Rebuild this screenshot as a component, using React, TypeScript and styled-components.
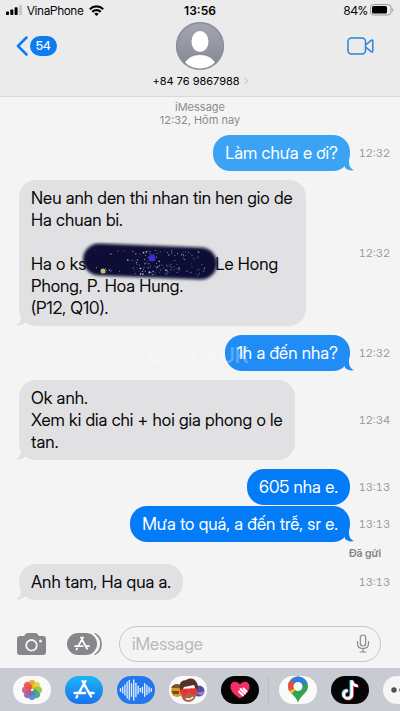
import React from "react";
import styled, { createGlobalStyle } from "styled-components";

const FONT = `"Inter Display", Inter, "Noto Sans", sans-serif`;

const Global = createGlobalStyle`
  * { box-sizing: border-box; }
  html, body, #root { height: 100%; }
  body { margin: 0; background: #f4f4f5; font-family: ${FONT}; color: #000; }
  svg { display: block; flex: none; }
`;

const Screen = styled.div`
  display: flex;
  flex-direction: column;
  min-height: 100%;
  overflow: hidden;
`;

const Header = styled.header`
  background: #ebebec;
  border-bottom: 1px solid #d9d9da;
`;

const StatusBar = styled.div`
  display: grid;
  grid-template-columns: 1fr auto 1fr;
  align-items: center;
  height: 20px;
  padding: 0 6px;
  font-size: 12px;
`;

const StatusGroup = styled.div<{ $end?: boolean }>`
  display: flex;
  align-items: center;
  justify-content: ${(p) => (p.$end ? "flex-end" : "flex-start")};
  gap: ${(p) => (p.$end ? 2 : 5)}px;
`;

const Clock = styled.time`
  font-family: Inter, sans-serif;
  font-weight: 600;
  font-size: 12px;
`;

const NavBar = styled.nav`
  display: grid;
  grid-template-columns: 1fr auto 1fr;
  height: 76px;
  padding: 2px 26px 0 16px;
`;

const Button = styled.button`
  display: flex;
  align-items: center;
  justify-content: center;
  border: 0;
  padding: 0;
  background: none;
  color: inherit;
  font: inherit;
`;

const BackButton = styled(Button)`
  justify-self: start;
  align-self: start;
  height: 48px;
  gap: 2px;
`;

const Badge = styled.span`
  background: #0a7cf4;
  color: #fff;
  border-radius: 10px;
  height: 20px;
  line-height: 20px;
  padding: 0 6px;
  font-size: 12px;
  font-weight: 500;
`;

const Contact = styled(Button)`
  justify-content: flex-start;
  flex-direction: column;
  gap: 4px;
  padding-left: 10px;
`;

const ContactName = styled.span`
  display: flex;
  align-items: center;
  gap: 4px;
  font-family: Inter, sans-serif;
  font-size: 11px;
  line-height: 14px;
`;

const VideoButton = styled(Button)`
  justify-self: end;
  align-self: start;
  height: 48px;
`;

const Thread = styled.main`
  position: relative;
  flex: 1;
  display: flex;
  flex-direction: column;
  padding: 4px 10px 0 19px;
`;

const Stamp = styled.div`
  text-align: center;
  color: #8b8b8f;
  font-family: Inter, "Noto Sans", sans-serif;
  font-size: 11px;
  line-height: 13px;
  padding: 0 9px 8px 0;
`;

const Row = styled.div<{ $tight?: boolean }>`
  display: flex;
  align-items: center;
  justify-content: space-between;
  margin-bottom: ${(p) => (p.$tight ? 1 : 9)}px;
`;

const Time = styled.time`
  color: #97979b;
  font-size: 11px;
  font-variant-numeric: tabular-nums;
  width: 40px;
  text-align: right;
`;

const Side = styled.div<{ $mine?: boolean }>`
  flex: 1;
  display: flex;
  justify-content: ${(p) => (p.$mine ? "flex-end" : "flex-start")};
`;

const Bubble = styled.div<{ $color: string; $mine?: boolean }>`
  position: relative;
  max-width: 287px;
  padding: 7px 12px;
  border-radius: 17px;
  font-size: 17px;
  line-height: 22px;
  white-space: pre-line;
  background: ${(p) => p.$color};
  color: ${(p) => (p.$mine ? "#fff" : "#0a0a0a")};
`;

const Tail = styled.svg<{ $mine?: boolean }>`
  position: absolute;
  bottom: 0;
  ${(p) => (p.$mine ? "right: -4px;" : "left: -3px; transform: scaleX(-1);")}
`;

const Scribble = styled.span`
  position: relative;
  display: inline-block;
  width: 129px;
  height: 10px;
  svg { position: absolute; left: -5px; top: -18px; }
`;

const Delivered = styled.div`
  align-self: flex-end;
  color: #85858a;
  font-size: 11px;
  font-weight: 600;
  line-height: 12px;
  margin: -4px 9px 5px 0;
`;

const Watermark = styled.div`
  position: absolute;
  left: 148px;
  top: 247px;
  font-size: 21px;
  font-weight: 600;
  line-height: 24px;
  color: rgba(255, 255, 255, 0.26);
`;

const Composer = styled.form`
  display: flex;
  align-items: center;
  height: 43px;
  padding: 0 19px 6px 17px;
`;

const ToolButton = styled(Button)<{ $gap: number }>`
  margin-right: ${(p) => p.$gap}px;
`;

const Field = styled.label`
  flex: 1;
  min-width: 0;
  display: flex;
  align-items: center;
  height: 36px;
  padding: 0 10px 0 12px;
  border: 1px solid #c6c6c9;
  border-radius: 18px;
`;

const Input = styled.input`
  flex: 1;
  min-width: 0;
  border: 0;
  padding: 0;
  outline: 0;
  background: none;
  font: 17px/22px ${FONT};
  &::placeholder { color: #b9b9bd; opacity: 1; }
`;

const AppStrip = styled.div`
  display: flex;
  align-items: center;
  gap: 14px;
  height: 43px;
  padding-left: 13px;
  background: #c9cbd3;
  overflow: hidden;
`;

const AppButton = styled(Button)<{ $bg: string }>`
  flex: none;
  width: 38px;
  height: 28px;
  border-radius: 14px;
  overflow: hidden;
  background: ${(p) => p.$bg};
`;

const Divider = styled.span`
  flex: none;
  width: 1px;
  height: 26px;
  margin: 0 -4px 0 -5px;
  background: #b9bbc3;
`;

const TAIL = "M0 2H4V6C4 10 6 13 9 14C6 15 3 14 0 12Z";

function Message({ mine, color = "#e1e1e4", tail = true, time, tight, children }: {
  mine?: boolean; color?: string; tail?: boolean; time: string; tight?: boolean; children: React.ReactNode;
}) {
  return (
    <Row $tight={tight}>
      <Side $mine={mine}>
        <Bubble $mine={mine} $color={color}>
          {children}
          {tail && (
            <Tail $mine={mine} width="9" height="15" viewBox="0 0 9 15">
              <path d={mine ? `M-4 0H4V6Z${TAIL}` : TAIL} fill={color} />
            </Tail>
          )}
        </Bubble>
      </Side>
      <Time>{time}</Time>
    </Row>
  );
}

const noise = (n: number) => {
  const v = Math.sin(n * 127.1 + 11.7) * 43758.5453;
  return v - Math.floor(v);
};

const stars = Array.from({ length: 150 }, (_, i) => {
  const x = i < 30 ? 10 + noise(i) * 60 : 54 + noise(i) * 70;
  return { x, y: 6 + noise(i + 500) * 26 + x / 40, r: i % 9 === 0 ? 0.9 : 0.5, o: 0.3 + noise(i + 900) * 0.6 };
});

const StarryScribble = () => (
  <Scribble>
    <svg width="140" height="40" viewBox="0 0 140 40" aria-hidden="true">
      <defs><filter id="soft" filterUnits="userSpaceOnUse" x="0" y="0" width="140" height="40"><feGaussianBlur stdDeviation="1.4" /></filter></defs>
      <path d="M18 17.500L120 21.500" stroke="#100f35" strokeWidth="32" strokeLinecap="round" filter="url(#soft)" />
      {stars.map((s, i) => <circle key={i} cx={s.x} cy={s.y} r={s.r} fill="#d8dcff" opacity={s.o} />)}
      <circle cx="71" cy="16" r="3.500" fill="#4934e8" opacity=".85" />
      <circle cx="22" cy="29" r="2.500" fill="#c3c46c" />
    </svg>
  </Scribble>
);

const AStore = ({ size }: { size: number }) => (
  <svg width={size} height={size} viewBox="0 0 22 22" fill="none" stroke="#fff" strokeWidth="2.400" strokeLinecap="round">
    <path d="M12.500 2L6 13.500M9.500 2L18 17.500M1.500 14H12M16.500 14H20.500M4.300 17L3.500 18.500" />
  </svg>
);

const petals = ["#f49a22", "#e6cf29", "#8fc13e", "#3ea577", "#4b86cb", "#8a62ae", "#d14f82", "#e8503a"];
const waves = [3, 7, 12, 19, 23, 15, 24, 16, 9, 4, 7, 15, 11, 6, 3];

export default function App() {
  return (
    <Screen>
      <Global />
      <Header>
        <StatusBar>
          <StatusGroup>
            <svg width="16" height="10" viewBox="0 0 16 10" aria-label="Signal">
              <rect x="0" y="6.500" width="3" height="3.500" rx=".8" /><rect x="4.300" y="4.500" width="3" height="5.500" rx=".8" />
              <rect x="8.600" y="2.200" width="3" height="7.800" rx=".8" /><rect x="13" y="0" width="3" height="10" rx=".8" fill="#c8c8ca" />
            </svg>
            <span>VinaPhone</span>
            <svg width="15" height="11" viewBox="0 0 15 11" aria-label="Wi-Fi" fill="none" stroke="#000" strokeWidth="2.200">
              <path d="M.8 4.200A9.500 9.500 0 0 1 14.200 4.200M3.300 6.900A6 6 0 0 1 11.700 6.900" /><path d="M5.300 8.700A3.200 3.200 0 0 1 9.700 8.700L7.500 11Z" fill="#000" stroke="none" />
            </svg>
          </StatusGroup>
          <Clock>13:56</Clock>
          <StatusGroup $end>
            <span>84%</span>
            <svg width="24" height="12" viewBox="0 0 24 12" aria-label="Battery">
              <rect x=".5" y=".5" width="20.500" height="10.500" rx="3" fill="none" stroke="#9a9a9c" /><rect x="2" y="2" width="15" height="7.500" rx="1.500" /><path d="M22.300 4V8Q23.500 7.200 23.500 6T22.300 4" fill="#9a9a9c" />
            </svg>
          </StatusGroup>
        </StatusBar>
        <NavBar>
          <BackButton aria-label="Back, 54 unread">
            <svg width="12" height="20" viewBox="0 0 12 20" fill="none" stroke="#0a7cf4" strokeWidth="2.500" strokeLinecap="round" strokeLinejoin="round"><path d="M10.500 1.500L2 10L10.500 18.500" /></svg>
            <Badge>54</Badge>
          </BackButton>
          <Contact>
            <svg width="48" height="48" viewBox="0 0 48 48" aria-hidden="true">
              <defs><linearGradient id="avatar" x2="0" y2="1"><stop stopColor="#a3a6af" /><stop offset="1" stopColor="#858892" /></linearGradient><clipPath id="face"><circle cx="24" cy="24" r="24" /></clipPath></defs>
              <circle cx="24" cy="24" r="24" fill="url(#avatar)" />
              <g fill="#fff" clipPath="url(#face)"><ellipse cx="24" cy="19.500" rx="8.500" ry="10.500" /><ellipse cx="24" cy="44" rx="15.500" ry="11" /></g>
              <circle cx="24" cy="24" r="23.200" fill="none" stroke="#8d909a" strokeWidth="1.600" />
            </svg>
            <ContactName>+84 76 9867988
              <svg width="4" height="8" viewBox="0 0 4 8" fill="none" stroke="#b9b9bc"><path d="M.5 .8L3.500 4L.5 7.200" /></svg>
            </ContactName>
          </Contact>
          <VideoButton aria-label="Video call">
            <svg width="27" height="18" viewBox="0 0 27 18" fill="none" stroke="#2a82dc" strokeWidth="1.500" strokeLinejoin="round"><rect x="1" y="1" width="17.500" height="16" rx="3.500" /><path d="M19 7.800L24 3.400Q25.800 2.300 25.800 4V14Q25.800 15.700 24 14.600L19 10.200" /></svg>
          </VideoButton>
        </NavBar>
      </Header>

      <Thread>
        <Stamp>iMessage<br />12:32, Hôm nay</Stamp>
        <Message mine color="#3aa3f3" time="12:32">Làm chưa e ơi?</Message>
        <Message time="12:32">
          {"Neu anh den thi nhan tin hen gio de Ha chuan bi.\n\nHa o ks"}<StarryScribble />{"Le Hong Phong, P. Hoa Hung.\n(P12, Q10)."}
        </Message>
        <Message mine color="#208cf5" time="12:32">1h a đến nha?</Message>
        <Message time="12:34">{"Ok anh.\nXem ki dia chi + hoi gia phong o le\ntan."}</Message>
        <Message mine color="#047bf7" tail={false} tight time="13:13">605 nha e.</Message>
        <Message mine color="#047bf7" time="13:13">Mưa to quá, a đến trễ, sr e.</Message>
        <Delivered>Đã gửi</Delivered>
        <Message time="13:13">Anh tam, Ha qua a.</Message>
        <Watermark>CHECKUK</Watermark>
      </Thread>

      <Composer onSubmit={(e) => e.preventDefault()}>
        <ToolButton type="button" aria-label="Camera" $gap={21}>
          <svg width="29" height="24" viewBox="0 0 29 24"><path fill="#87878b" d="M3 4H7L9 1.500Q9.500 1 10.500 1H18.500Q19.500 1 20 1.500L22 4H26Q29 4 29 7V20Q29 23 26 23H3Q0 23 0 20V7Q0 4 3 4Z" /><circle cx="14.500" cy="13.300" r="5.300" fill="none" stroke="#f4f4f5" strokeWidth="1.800" /><circle cx="23.500" cy="9" r="1.500" fill="#f4f4f5" /></svg>
        </ToolButton>
        <ToolButton type="button" aria-label="Apps" $gap={17}>
          <svg width="35" height="24" viewBox="0 0 35 24"><rect y="1" width="30" height="22" rx="11" fill="#87878b" /><path d="M27.500 1.500Q34 4.500 34 12T27.500 22.500" fill="none" stroke="#87878b" strokeWidth="1.700" /><path d="M25.500 1.500Q31.500 5 31.500 12T25.500 22.500" fill="none" stroke="#f4f4f5" strokeWidth="1.700" /><g transform="translate(7 4)"><AStore size={16} /></g></svg>
        </ToolButton>
        <Field>
          <Input aria-label="Message" placeholder="iMessage" />
          <svg width="14" height="19" viewBox="0 0 14 19" fill="none" stroke="#8a8a8e" strokeWidth="1.200" strokeLinecap="round"><rect x="4.300" y="1" width="5.400" height="11" rx="2.700" /><path d="M1.500 7.500V9.500Q1.500 14.500 7 14.500T12.500 9.500V7.500M7 14.500V18M4 18H10" /></svg>
        </Field>
      </Composer>

      <AppStrip>
        <AppButton $bg="#fafafa" aria-label="Photos">
          <svg width="22" height="22" viewBox="0 0 22 22">{petals.map((c, i) => <rect key={c} x="7.700" y="1" width="6.600" height="9" rx="3.200" fill={c} opacity=".9" transform={`rotate(${i * 45} 11 11)`} />)}</svg>
        </AppButton>
        <AppButton $bg="linear-gradient(#1cb5f5, #1a72ee)" aria-label="App Store"><AStore size={22} /></AppButton>
        <AppButton $bg="#2277ee" aria-label="Audio">
          <svg width="34" height="24" viewBox="0 0 34 24" stroke="#e6f2ff" strokeWidth="1.300" strokeLinecap="round">{waves.map((h, i) => <path key={i} d={`M${1.500 + i * 2.200} ${12 - h / 2.400}V${12 + h / 2.400}`} />)}</svg>
        </AppButton>
        <AppButton $bg="#fafafa" aria-label="Memoji">
          <svg width="38" height="28" viewBox="0 0 38 28"><circle cx="8" cy="15" r="6" fill="#d99a25" /><path d="M2 12Q5 6 12 9V12Z" fill="#7a5522" /><path d="M3 15H10V18H4Z" fill="#6b4b28" /><circle cx="30" cy="15" r="5.500" fill="#4d4ea4" /><path d="M27 17L36 15L33 20Z" fill="#a07ccf" /><path d="M12 13Q11 26 20 26Q28 25 28 12Z" fill="#ad6546" /><path d="M11 14Q9 4 17 4Q24 0 28 7Q30 11 28 15L25 9L15 11L13 15Z" fill="#573125" /><path d="M15.500 20C12 18 10.500 16.500 11 14.500Q12.500 12 15.300 14Q18 11.500 19.800 14.300Q19.500 18 15.500 20ZM24 19C20.500 17 19.500 15.500 20.300 13.500Q21.800 11.500 24 13.500Q26.500 11.500 28.200 13.500Q28 17 24 19Z" fill="#f22e35" /><path d="M17 22.500Q21 24.500 24 21" stroke="#fff" strokeWidth="1.400" fill="none" /></svg>
        </AppButton>
        <AppButton $bg="#050505" aria-label="Digital Touch">
          <svg width="22" height="20" viewBox="0 0 22 20"><path d="M11 18.500C5 14.500 1.500 11 1.500 6.500C1.500 1 8 0 11 4.500C14 0 20.500 1 20.500 6.500C20.500 11 17 14.500 11 18.500Z" fill="#f72d63" /><path d="M10 11.500L14 15.500M11.500 9L16 13.500M14.500 8.500L17.500 11.500" stroke="#fff" strokeWidth="2" strokeLinecap="round" /></svg>
        </AppButton>
        <Divider />
        <AppButton $bg="#fafafa" aria-label="Maps">
          <svg width="22" height="27" viewBox="0 0 22 27"><defs><clipPath id="pin"><path d="M11 26.500Q9.500 22 4 17Q1 14 1 10.500A10 10 0 0 1 21 10.500Q21 14 18 17Q12.500 22 11 26.500Z" /></clipPath></defs><g clipPath="url(#pin)"><path fill="#2da552" d="M0 0H22V27H0Z" /><path d="M11 11L1 22V8Z" fill="#f5bd27" /><path d="M11 11L0 16V4L5 0Z" fill="#e84a3d" /><path d="M11 11L3 4L8 0H22V7Z" fill="#347ddd" /></g><circle cx="11" cy="10.500" r="4.500" fill="#fafafa" /></svg>
        </AppButton>
        <AppButton $bg="#050505" aria-label="TikTok">
          <svg width="20" height="23" viewBox="0 0 20 23" fill="none" strokeWidth="3"><path d="M11 2V16A4 4 0 1 1 7 12M11 2Q12 7 17 7.500" stroke="#43dce0" /><path d="M12.500 3V17A4 4 0 1 1 8.500 13M12.500 3Q13.500 8 18.500 8.500" stroke="#f2365c" /><path d="M11.800 2.500V16.500A4 4 0 1 1 7.800 12.500M11.800 2.500Q12.800 7.500 17.800 8" stroke="#fff" strokeWidth="2.600" /></svg>
        </AppButton>
        <AppButton $bg="#f5f5f6" aria-label="More">
          <svg width="22" height="6" viewBox="0 0 22 6" fill="#505056"><circle cx="3" cy="3" r="2.700" /><circle cx="11" cy="3" r="2.700" /><circle cx="19" cy="3" r="2.700" /></svg>
        </AppButton>
      </AppStrip>
    </Screen>
  );
}
